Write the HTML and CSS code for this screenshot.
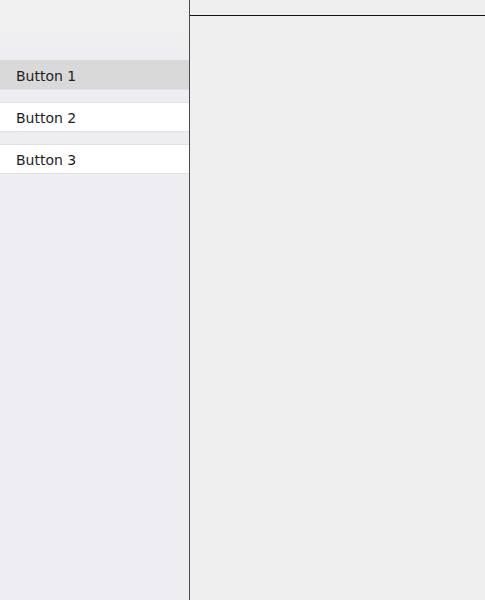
FILE: index.html
```html
<!DOCTYPE html>
<html>
<head>
<meta charset="utf-8">
<link rel="stylesheet" href="styles.css">
</head>
<body>
<div class="app">
  <aside class="sidebar">
    <div class="cell selected">Button 1</div>
    <div class="cell">Button 2</div>
    <div class="cell">Button 3</div>
  </aside>
  <main class="content">
    <div class="topbar"></div>
  </main>
</div>
</body>
</html>
```
FILE: styles.css
```css
html, body {
  margin: 0;
  padding: 0;
  height: 100%;
}
body {
  font-family: "DejaVu Sans", Verdana, sans-serif;
  font-size: 14px;
  color: #1e1e1e;
}
.app {
  display: flex;
  height: 600px;
}
.sidebar {
  width: 190px;
  flex: none;
  border-right: 1px solid #4a4a4a;
  background: linear-gradient(#f0f0f0 0px, #f0f0f0 30px, #eeedf2 55px, #eeedf2 100%);
  padding-top: 60px;
  display: flex;
  flex-direction: column;
  gap: 12px;
  box-sizing: border-box;
}
.cell {
  height: 27px;
  padding-top: 1px;
  box-sizing: content-box;
  border-top: 1px solid #e3e2e8;
  border-bottom: 1px solid #e3e2e8;
  background: #ffffff;
  padding-left: 16px;
  display: flex;
  align-items: center;
}
.cell.selected {
  background: #d9d9d9;
  border-color: #d9d9d9 #d9d9d9 #e3e2e8;
}
.content {
  flex: 1;
  background: #efefef;
}
.topbar {
  height: 15px;
  border-bottom: 1px solid #111;
}
```
